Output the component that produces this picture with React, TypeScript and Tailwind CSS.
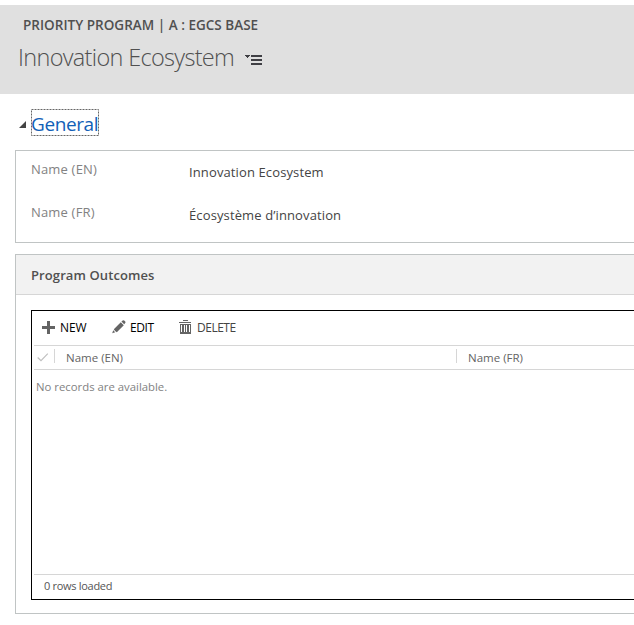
import React from "react";

function Header() {
  return (
    <header className="mt-[5px] h-[89px] bg-[#e0e0e0]">
      <div className="pt-[10px] pl-[23px] text-[13.5px] leading-5 font-semibold tracking-[0.02px] text-[#505050]">
        PRIORITY PROGRAM | A : EGCS BASE
      </div>
      <div className="flex pl-[18px]">
        <h1 className="mt-[6px] w-[227px] text-[23.5px] leading-8 font-light tracking-[-0.68px] text-[#505050]">
          Innovation Ecosystem
        </h1>
        <svg className="mt-[20px]" width="18" height="11" shapeRendering="crispEdges" fill="#3f3f44">
          <path d="M0 0h5v1H4v1H3v1H2V2H1V1H0zM6 0h11v2H6zM6 4h11v2H6zM6 8h11v2H6z" />
        </svg>
      </div>
    </header>
  );
}

function Field({ label, value }: { label: string; value: string }) {
  return (
    <div className="flex h-[43px] text-[13px] leading-5">
      <div className="w-[158px] tracking-[0.18px] text-[#828282]">{label}</div>
      <div className="pt-[3px] tracking-[0.12px] text-[#444444]">{value}</div>
    </div>
  );
}

function Toolbar() {
  return (
    <div className="flex h-[34px] items-start pt-[7px] text-xs leading-5 tracking-[-0.4px] text-black">
      <button className="flex w-[70px] pl-[10px]">
        <svg className="mt-[3px] mr-[4px] shrink-0" width="14" height="13" fill="#646464" shapeRendering="crispEdges">
          <path d="M5 0h3v5h5v3H8v5H5V8H0V5h5z" />
        </svg>
        <span className="tracking-[-0.1px]">NEW</span>
      </button>
      <button className="flex w-[68px] pl-[10px]">
        <svg className="mt-[2px] mr-[4px] shrink-0" width="14" height="14" fill="#646464">
          <path d="M.2 13.2l1-3 2 2zM1.8 9.2l7-7 3 3-7 7q-2-.8-3-3zM9.4 1.5 10.7.4q.8-.5 1.5.1l1 1q.6.7 0 1.4L12.2 4.3z" />
        </svg>
        EDIT
      </button>
      <button className="flex pl-[9px] text-[#444444]">
        <svg className="mt-[2px] mr-[6px] shrink-0" width="12" height="14" fill="#646464" shapeRendering="crispEdges">
          <path d="M4 0h5v1H4zM0 2h12v1H0zM1 4h11v1H1zM1 5h1v8H1zM3 5h2v7H3zM6 5h1v7H6zM8 5h2v7H8zM11 5h1v8h-1zM1 12h11v2H1z" />
        </svg>
        <span className="tracking-[-0.5px]">DELETE</span>
      </button>
    </div>
  );
}

function Grid() {
  return (
    <div className="mt-[15px] ml-[15px] flex h-[290px] flex-col border border-r-0 border-black">
      <Toolbar />
      <div className="ml-[2px] flex h-[25px] border-y border-[#d6d6d6] pt-[3px] text-[11.5px] leading-[18px] text-[#646464]">
        <div className="flex h-[14px] w-[21px] items-center border-r border-[#d6d6d6] pl-[3px]">
          <svg className="mt-[2px]" width="12" height="9" fill="none" stroke="#c0c0c0" strokeWidth="1.2">
            <path d="M.7 4.5 4 7.7 10.8.7" />
          </svg>
        </div>
        <div className="w-[401px] pl-[11px]">Name (EN)</div>
        <div className="h-[14px] border-l border-[#d6d6d6] pl-[11px]">
          <span>Name (FR)</span>
        </div>
      </div>
      <div className="grow pt-[7px] pl-[4px] text-[11.35px] leading-5 text-[#828282]">No records are available.</div>
      <div className="ml-[2px] h-[25px] border-t border-[#d6d6d6] pl-[10px] text-[11px] leading-[22px] tracking-[-0.3px] text-[#555555]">
        0 rows loaded
      </div>
    </div>
  );
}

export default function App() {
  return (
    <div className="flex h-[625px] w-[634px] flex-col overflow-hidden bg-white font-['Open_Sans','Noto_Sans',sans-serif] whitespace-nowrap">
      <Header />
      <div className="mt-[15px] flex h-[27px] pl-[19px]">
        <svg className="mt-[12px] mr-[5px]" width="7" height="7" fill="#444444">
          <path d="M7 0v7H0z" />
        </svg>
        <h2 className="relative h-[27px] w-[68px] pt-px text-[19px] leading-7 tracking-[-0.4px] text-[#1160b7]">
          General
          <svg className="absolute inset-0" width="68" height="27" fill="none" stroke="#666666" strokeDasharray="2 1">
            <rect x="0.5" y="0.5" width="67" height="26" />
          </svg>
        </h2>
      </div>
      <section className="mt-[14px] ml-[15px] h-[93px] border border-r-0 border-[#c0c4c4] pt-[8px] pl-[15px]">
        <Field label="Name (EN)" value="Innovation Ecosystem" />
        <Field label="Name (FR)" value="Écosystème d’innovation" />
      </section>
      <section className="mt-[11px] ml-[15px] h-[360px] border border-r-0 border-[#c0c4c4]">
        <h3 className="h-[40px] border-b border-[#d6d6d6] bg-[#f2f2f2] pl-[15px] text-[13px] leading-10 font-semibold tracking-[0.1px] text-[#505050]">
          Program Outcomes
        </h3>
        <Grid />
      </section>
    </div>
  );
}
